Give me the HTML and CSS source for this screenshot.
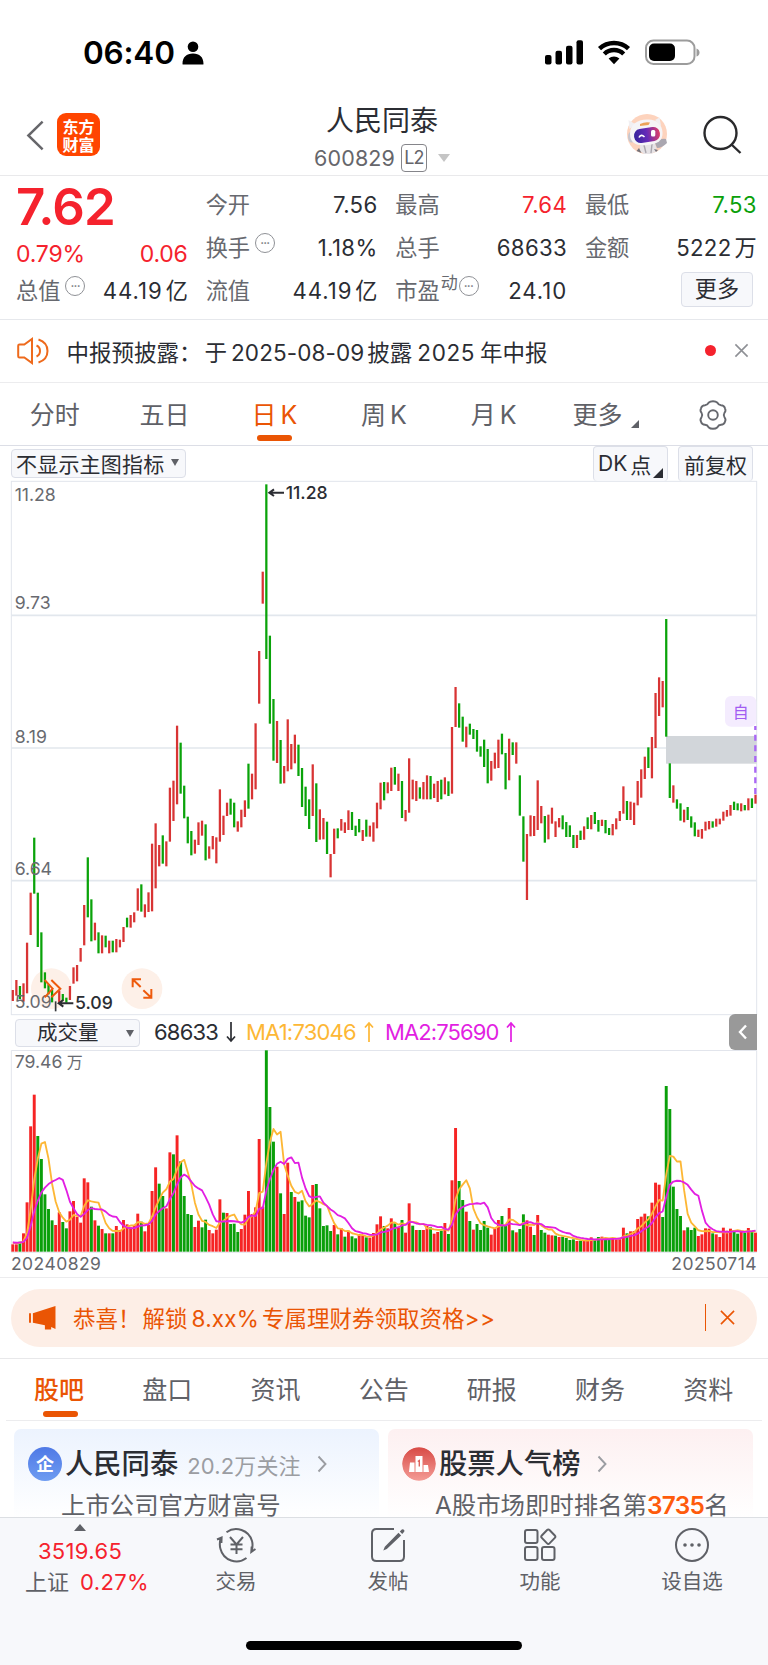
FILE: index.html
```html
<!DOCTYPE html>
<html lang="zh-CN">
<head>
<meta charset="utf-8">
<title>人民同泰 600829</title>
<link rel="stylesheet" href="styles.css">
</head>
<body>
<div class="app">
  <div class="status">
    <span class="clock">06:40</span>
    <svg class="person" viewBox="0 0 22 24"><circle cx="11" cy="5.800" r="5.300"/><path d="M0.500 23c0-7 4-10.500 10.500-10.500S21.500 16 21.500 23q0 .5-.8.5H1.300q-.8 0-.8-.5z"/></svg>
    <svg class="sys" viewBox="0 0 158 28">
      <rect x="1" y="16" width="6.500" height="9.500" rx="2"/><rect x="11.500" y="11.800" width="6.500" height="13.700" rx="2"/><rect x="22" y="6.800" width="6.500" height="18.700" rx="2"/><rect x="32.500" y="1.300" width="6.500" height="24.200" rx="2"/>
      <g class="wifi"><path d="M55.500 9.600a21.500 21.500 0 0 1 29 0"/><path d="M60.300 15a14 14 0 0 1 19.400 0"/></g><path d="M64.600 19.600a8 8 0 0 1 10.800 0L70 25.300z"/>
      <rect class="shell" x="102" y="1.500" width="48.500" height="23.500" rx="7.500"/><rect x="105" y="4.500" width="26" height="17.500" rx="5"/><path class="nub" d="M152.500 9.500q3 1 3 4t-3 4z"/>
    </svg>
  </div>

  <header class="head">
    <svg class="back" viewBox="0 0 20 32"><path d="M17.500 1.500L2.500 16l15 14.500"/></svg>
    <div class="logo"><span>东方</span><span>财富</span></div>
    <div class="title">
      <h1>人民同泰</h1>
      <div class="code"><span class="num">600829</span><span class="l2">L2</span><i class="drop"></i></div>
    </div>
    <svg class="robot" viewBox="0 0 44 44">
      <defs><linearGradient id="visor" x1="0" y1="0" x2="1" y2="0"><stop offset="0" stop-color="#35249c"/><stop offset=".5" stop-color="#652ab8"/><stop offset="1" stop-color="#df3e68"/></linearGradient></defs>
      <circle cx="22" cy="22" r="20" fill="#fdd3bd"/>
      <path d="M10 12L3.500 8l1 9zM30 8l4.500-2.500L36 14z" fill="#f1eff2"/>
      <ellipse cx="6.500" cy="25" rx="3.500" ry="5.500" fill="#c7c6ce"/>
      <path d="M15 31h15l2 8-6 3h-7l-4-3z" fill="#e6e3e6"/><path d="M19 33l2 8M27 32l-1 9" stroke="#aaa7ae" stroke-width="1.400" fill="none"/><path d="M14 36l-2.500 3 5 2zM29 37l2 3 2-2z" fill="#77747b"/>
      <path d="M30 31q5-5 11-4l1 4q-5 5-10 5z" fill="#aaa7b0"/>
      <path d="M5 22C5 12 12 8 22 7.500s15 5 15.500 13-5 11.500-15 12.500S5 32 5 22z" fill="#f5f4f6"/>
      <path d="M15 12q5-2.500 10-1.500l-1.500 2.500L15 14z" fill="#eba258"/>
      <rect x="9" y="16" width="26" height="14" rx="6.500" fill="url(#visor)" transform="rotate(-9 22 23)"/>
      <path d="M14 25.500q2-4 5.500-.5" stroke="#fff" stroke-width="1.600" fill="none"/><rect x="26" y="18" width="4.300" height="6.500" rx="1.500" fill="#fff"/>
    </svg>
    <svg class="search" viewBox="0 0 40 40"><circle cx="18.500" cy="18" r="16"/><path d="M29.500 29.500l9 8.500"/></svg>
  </header>

  <section class="quote">
    <div class="price">
      <b class="last">7.62</b>
      <div class="row red"><span>0.79%</span><span>0.06</span></div>
    </div>
    <div class="cell c2"><label>今开</label><span>7.56</span></div>
    <div class="cell c3"><label>最高</label><span class="red">7.64</span></div>
    <div class="cell c4"><label>最低</label><span class="green">7.53</span></div>
    <div class="cell c2"><label>换手<i class="more-dot">•••</i></label><span>1.18%</span></div>
    <div class="cell c3"><label>总手</label><span>68633</span></div>
    <div class="cell c4"><label>金额</label><span>5222<em>万</em></span></div>
    <div class="cell c1"><label>总值<i class="more-dot">•••</i></label><span class="wide">44.19<em>亿</em></span></div>
    <div class="cell c2"><label>流值</label><span class="wide">44.19<em>亿</em></span></div>
    <div class="cell c3"><label>市盈<sup>动</sup><i class="more-dot tight">•••</i></label><span class="wide">24.10</span></div>
    <div class="cell c4 end"><button class="btn big">更多</button></div>
  </section>

  <section class="news">
    <svg class="speaker" viewBox="0 0 32 28"><path d="M2.500 7.500h4.800L15 2v24l-7.700-5.500H2.500q-1.300 0-1.300-1.300V8.800q0-1.300 1.300-1.300z"/><path d="M19.500 8.500q3.500 1.500 3.500 5.500t-3.500 5.500M21.500 2.500q9 3 9 11.500t-9 11.500"/></svg>
    <span class="news-text">中报预披露：<span class="g1">于</span><span class="dt">2025-08-09</span>披露<span class="yr">2025</span>年中报</span>
    <i class="dot"></i>
    <svg class="close" viewBox="0 0 16 16"><path d="M1.500 1.500l13 13M14.500 1.500l-13 13"/></svg>
  </section>

  <nav class="tabs periods">
    <a>分时</a><a>五日</a><a class="on">日<span>K</span></a><a>周<span>K</span></a><a>月<span>K</span></a><a class="has-corner">更多<svg class="corner" viewBox="0 0 8 8"><path d="M8 0v8H0z"/></svg></a>
    <a><svg class="gear" viewBox="0 0 30 30"><path d="M10.500 2.800Q12.200 1.200 15 1.200T19.500 2.800Q20.500 5 23 5.200Q26 5.200 27 8.300Q28.200 11 26.500 12.700Q25 15 26.500 17.300Q28.200 19 27 21.700Q26 24.800 23 24.800Q20.500 25 19.500 27.200Q17.800 28.800 15 28.800T10.500 27.200Q9.500 25 7 24.800Q4 24.800 3 21.700Q1.800 19 3.500 17.300Q5 15 3.500 12.700Q1.800 11 3 8.300Q4 5.200 7 5.200Q9.500 5 10.500 2.800z"/><circle cx="15" cy="15" r="4.800"/></svg></a>
  </nav>

  <div class="tools">
    <button class="btn ind">不显示主图指标<i class="tri"></i></button>
    <button class="btn dk">DK<span>点</span><svg class="corner dark" viewBox="0 0 8 8"><path d="M8 0v8H0z"/></svg></button>
    <button class="btn fq">前复权</button>
  </div>
  <svg class="kline" id="kline" viewBox="0 0 2304 1608"></svg>

  <div class="volhead">
    <button class="btn vol">成交量<i class="tri"></i></button>
    <span class="v0">68633<svg class="arr" viewBox="0 0 10 22"><path d="M5 1v19M1 15.500l4 4.500 4-4.500"/></svg></span>
    <span class="v1">MA1:73046<svg class="arr" viewBox="0 0 10 22"><path d="M5 21V2M1 6.500L5 2l4 4.500"/></svg></span>
    <span class="v2">MA2:75690<svg class="arr" viewBox="0 0 10 22"><path d="M5 21V2M1 6.500L5 2l4 4.500"/></svg></span>
    <div class="fold"><svg viewBox="0 0 10 16"><path d="M8 1.500L2 8l6 6.500"/></svg></div>
  </div>
  <svg class="volume" id="volume" viewBox="0 120 2304 609"></svg>
  <div class="dates"><span>20240829</span><span>20250714</span></div>

  <div class="promo-wrap">
    <div class="promo">
      <svg class="horn" viewBox="0 0 30 26"><path d="M1 8.500h2v10H1zM5 8.500L28.500 1v24l-4.500-2v2.500h-6.500V21L5 18.500z"/></svg>
      <span class="promo-text">恭喜！<span class="p1">解锁</span><span class="p2">8.xx%</span>专属理财券领取资格<span class="p3">&gt;&gt;</span></span>
      <i class="bar"></i>
      <svg class="close" viewBox="0 0 16 16"><path d="M1 1l14 14M15 1L1 15"/></svg>
    </div>
  </div>

  <nav class="tabs info"><a class="on">股吧</a><a>盘口</a><a>资讯</a><a>公告</a><a>研报</a><a>财务</a><a>资料</a></nav>

  <section class="cards">
    <div class="card blue">
      <div class="line"><i class="badge">企</i><b>人民同泰</b><small>20.2万关注</small><svg class="chev" viewBox="0 0 10 18"><path d="M1.500 1.500L8.500 9l-7 7.500"/></svg></div>
      <p>上市公司官方财富号</p>
    </div>
    <div class="card pink">
      <div class="line"><svg class="badge" viewBox="0 0 34 34"><defs><linearGradient id="rank" x1="0" y1="0" x2="0" y2="1"><stop offset="0" stop-color="#d84b46"/><stop offset="1" stop-color="#f49c96"/></linearGradient></defs><circle cx="17" cy="17" r="16.800" fill="url(#rank)"/><path fill="#fff" d="M8 15.500h4.500V25H7zM13.500 9h7v16h-7zM21.500 18H26l1 7h-5.500z"/><path d="M15.800 14.500l1.500-1v6" stroke="#dd625c" stroke-width="1.400" fill="none"/></svg><b>股票人气榜</b><svg class="chev" viewBox="0 0 10 18"><path d="M1.500 1.500L8.500 9l-7 7.500"/></svg></div>
      <p>A股市场即时排名第<strong>3735</strong>名</p>
    </div>
  </section>

  <footer class="dock">
    <div class="index"><i class="up"></i><span class="red">3519.65</span><div><em>上证</em><span class="red">0.27%</span></div></div>
    <div class="item"><svg viewBox="0 0 40 36"><path d="M10.500 5.200A16.500 16.500 0 0 1 36 14Q37.200 18 35.700 24.500M39.500 22l-4.200 3 .4-5.500M30.500 31A16.500 16.500 0 0 1 4.500 22Q3 17 4.800 10.500M1 12.500l4.600-2-.2 5.500M14 10l6.500 7.500L27 10M20.500 17.500V27M14.500 17.500h12M14.500 22.300h12"/></svg><span>交易</span></div>
    <div class="item"><svg viewBox="0 0 40 36"><path d="M26 2H8.500Q4 2 4 6.500v23Q4 34 8.500 34h23q4.500 0 4.500-4.500V13"/><path class="fill" d="M15.300 23.500l1.500-3.800L30.500 5.800l2.600 2.600L18.800 22zM31.800 4.500l2-2q1.100-.8 2.100.2t.3 2.100l-2 2.100z"/></svg><span>发帖</span></div>
    <div class="item"><svg viewBox="0 0 40 36"><rect x="5" y="3" width="12.500" height="13" rx="2"/><rect x="5" y="20" width="12.500" height="13" rx="2"/><rect x="22" y="20" width="12.500" height="13" rx="2"/><path d="M27.100 3q1.200-1.200 2.400 0l5.300 5.500q1.200 1.200 0 2.400l-5.300 5.500q-1.200 1.200-2.400 0l-5.300-5.500q-1.200-1.200 0-2.400z"/></svg><span>功能</span></div>
    <div class="item"><svg viewBox="0 0 40 36"><circle cx="20" cy="18" r="16"/><g class="fill"><circle cx="13" cy="18" r="1.800"/><circle cx="20" cy="18" r="1.800"/><circle cx="27" cy="18" r="1.800"/></g></svg><span>设自选</span></div>
    <div class="home"></div>
  </footer>
</div>
<script src="chart.js"></script>
</body>
</html>
```
FILE: styles.css
```css
* { box-sizing: border-box; }
body { margin: 0; background: #fff; font-family: Inter, "Noto Sans CJK SC", sans-serif; color: #2b2d33; }
i, em { font-style: normal; }
svg { display: block; flex: none; }
.app { width: 768px; height: 1665px; overflow: hidden; display: flex; flex-direction: column; }
.app > * { flex: none; }
.red { color: #f5222d; }
.green { color: #0aa00a; }

.status { height: 98px; padding: 38px 66px 0 83px; display: flex; align-items: flex-start; }
.clock { font-size: 31.500px; font-weight: 600; line-height: 29px; color: #000; width: 99px; letter-spacing: -.2px; }
.person { width: 22px; height: 24px; margin-top: 3px; }
.sys { width: 158px; height: 28px; margin: .5px 0 0 auto; }
.wifi { fill: none; stroke: #000; stroke-width: 4.500; }
.shell { fill: none; stroke: #9c9c9c; stroke-width: 2; }
.nub { fill: #9c9c9c; }

.head { height: 78px; border-bottom: 1.500px solid #e9e9eb; display: grid; grid-template-columns: 31px 253px 1fr auto auto; padding: 0 26px 0 26px; align-items: start; }
.back { width: 19px; height: 31px; margin-top: 22px; fill: none; stroke: #66666a; stroke-width: 2.600; }
.logo { width: 43px; height: 43px; margin-top: 15px; border-radius: 9px; background: #ff4500; color: #fff; font: 700 16px/18px "Noto Sans CJK SC", sans-serif; padding: 3.500px 0; display: flex; flex-direction: column; align-items: center; }
.logo span { height: 18px; }
.title { width: 144px; display: flex; flex-direction: column; align-items: center; }
.title h1 { margin: 6px 0 0; font-size: 28px; line-height: 34px; font-weight: 400; }
.code { display: flex; align-items: center; height: 28px; margin-top: 6px; color: #66666b; font-size: 21.500px; }
.code .num { letter-spacing: .15px; width: 87px; }
.l2 { width: 26px; height: 28px; border: 1.500px solid #85858a; border-radius: 4px; font-size: 18px; line-height: 26px; text-align: center; letter-spacing: -.8px; }
.drop { margin-left: 11px; border: 6px solid transparent; border-top: 8px solid #c5c5c5; border-bottom: 0; }
.robot { width: 44px; height: 44px; margin-top: 14px; }
.search { width: 40px; height: 40px; margin: 17px 0 0 33px; fill: none; stroke: #2a2a2c; stroke-width: 2.400; }

.quote { height: 143.500px; border-bottom: 1.500px solid #e6e8ec; padding: 7px 11.500px 0 16px; display: grid; grid-template-columns: repeat(4, 1fr); grid-template-rows: repeat(3, 43px); column-gap: 18px; font-size: 22.200px; }
.price { grid-row: 1 / 3; grid-column: 1; color: #f5222d; }
.last { display: block; font-size: 51px; line-height: 48px; font-weight: 600; letter-spacing: -.8px; }
.row { display: flex; justify-content: space-between; font-size: 23px; line-height: 28px; margin-top: 9px; letter-spacing: -.2px; }
.cell { display: flex; justify-content: space-between; align-items: center; line-height: 43px; }
.cell label { color: #67696f; display: flex; }
.cell span { letter-spacing: .35px; margin-right: -.3px; }
.cell span.wide { letter-spacing: .95px; }
.cell em { margin-left: 3px; letter-spacing: 0; }
.cell.end { justify-content: flex-end; }
.more-dot { width: 20px; height: 20px; border: 1.400px solid #8f9196; border-radius: 50%; margin: 7px 0 0 5px; font-size: 6px; line-height: 17px; text-align: center; color: #77797e; letter-spacing: -.3px; }
.more-dot.tight { margin-left: 1px; }
sup { font-size: 17px; line-height: 29px; margin-left: 1px; }
.btn { font: inherit; color: #2b2d33; background: #f7f8fb; border: 1.400px solid #dcdfe8; border-radius: 4px; padding: 0; display: flex; align-items: center; }
.btn.big { width: 72px; height: 35px; margin: -3px 3.500px 0 0; justify-content: center; line-height: 30px; }

.news { height: 63.500px; border-bottom: 1.500px solid #ececee; padding: 0 19px 0 17px; display: flex; align-items: center; font-size: 22.500px; }
.speaker { width: 32px; height: 28px; margin-right: 17.500px; fill: none; stroke: #ee6a1c; stroke-width: 2; }
.news-text { flex: 1; white-space: nowrap; }
.g1 { margin-left: 3px; }
.dt { margin: 0 3px 0 4px; letter-spacing: .1px; }
.yr { margin: 0 5px 0 5px; letter-spacing: .6px; }
.dot { width: 11px; height: 11px; border-radius: 50%; background: #f5222d; margin-right: 18px; }
.close { width: 15px; height: 15px; fill: none; stroke: #8e9095; stroke-width: 1.700; }

.tabs { display: grid; grid-template-columns: repeat(7, 1fr); font-size: 25px; color: #5f6167; }
.tabs a { position: relative; display: flex; align-items: center; justify-content: center; line-height: 36px; }
.tabs a span { margin-left: 4px; }
.tabs .on { color: #ea5504; }
.tabs .on::after { content: ""; position: absolute; left: 50%; width: 35px; height: 6.500px; margin-left: -17.500px; border-radius: 3px; background: #ea5504; }
.periods { height: 63px; border-bottom: 1.500px solid #dcdee6; }
.periods a { padding-top: 1px; }
.periods .on::after { bottom: 4px; }
.periods .has-corner { padding-left: 5px; }
.corner { width: 8px; height: 8px; align-self: flex-end; margin: 0 0 17px 9px; fill: #5f6167; }
.gear { width: 30px; height: 30px; fill: none; stroke: #66686e; stroke-width: 1.900; }

.tools { height: 34px; padding: 0 15px 0 11px; display: flex; font-size: 21px; white-space: nowrap; }
.btn.ind { width: 175px; height: 29px; margin-top: 3px; padding: 0 0 2px 4px; letter-spacing: .2px; }
.tri { border: 4.500px solid transparent; border-top: 7.500px solid #5f6167; border-bottom: 0; margin-left: 7px; }
.btn.dk { width: 75px; height: 35px; margin-left: auto; padding: 0 0 1px 4px; position: relative; border-bottom: 0; }
.dk span { margin-left: 3px; }
.corner.dark { width: 10px; height: 10px; position: absolute; right: 4px; bottom: 3px; margin: 0; fill: #2b2d33; }
.btn.fq { width: 75px; height: 35px; margin-left: 10px; padding-bottom: 1px; justify-content: center; border-bottom: 0; }

.kline { width: 768px; height: 536px; overflow: visible; }
.kline text, .volume text { font-size: 53px; fill: #686a70; }
.kline .mark { fill: #2b2d33; font-weight: 500; }
.frame { fill: none; stroke: #e2e5ec; stroke-width: 3; }
.grid { stroke: #e2e7ed; stroke-width: 5; }
.up-c { stroke: #d83434; stroke-width: 6.800; }
.dn-c { stroke: #0aa30a; stroke-width: 6.800; }
.up-v { fill: #f62424; }
.dn-v { fill: #0a9f0a; }
.low-c { stroke: #35373c; stroke-width: 5; }
.gap { fill: #d2d6da; }
.orb { fill: #fdf0e8; }
.glyph { fill: none; stroke: #ee5a0c; stroke-width: 6; }
.arrow { fill: none; stroke: #2b2d33; stroke-width: 6; }
.self { fill: #f4ecfe; }
.kline .self-t { fill: #a25cf2; font-size: 48px; }
.purple { stroke: #aa66f5; stroke-width: 7; stroke-dasharray: 18 14; }
.ma { fill: none; stroke-width: 5.500; stroke-linejoin: round; }
.ma5 { stroke: #fdb735; }
.ma10 { stroke: #e21fe2; }

.volhead { height: 34px; padding: 3px 0 0 15px; display: flex; font-size: 22px; line-height: 28px; position: relative; }
.btn.vol { width: 125px; height: 28px; font-size: 20.500px; padding: 0 5px 0 21px; justify-content: space-between; margin-right: 14px; line-height: 24px; }
.volhead span { display: flex; align-items: center; height: 26px; }
.volhead .arr { height: 22px; width: 10px; margin-left: 8px; fill: none; stroke: currentColor; stroke-width: 1.700; }
.v0 { width: 92px; letter-spacing: -.8px; }
.v1 { color: #fdb735; width: 139px; letter-spacing: -.8px; }
.v2 { color: #e21fe2; letter-spacing: -.9px; }
.fold { position: absolute; left: 729px; top: -2px; width: 28px; height: 36px; border-radius: 6px 0 0 6px; background: #999; display: flex; align-items: center; justify-content: center; }
.fold svg { width: 10px; height: 16px; fill: none; stroke: #fff; stroke-width: 2.400; }
.volume { width: 768px; height: 203px; }
.dates { height: 25px; border-bottom: 1.500px solid #ececee; display: flex; justify-content: space-between; padding: 0 11px; font-size: 17.500px; line-height: 22px; color: #65676d; letter-spacing: .45px; }

.promo-wrap { height: 81px; padding: 11px 11px 0; border-bottom: 1.500px solid #e8e8ea; }
.promo { height: 58px; border-radius: 29px; background: #fdeee6; color: #ea5504; display: flex; align-items: center; padding: 0 22px 2px 17px; font-size: 22.500px; }
.horn { width: 29px; height: 25px; fill: #ea5504; }
.promo-text { flex: 1; margin-left: 16px; white-space: nowrap; }
.p1 { margin-left: 2px; }
.p2 { margin: 0 3px 0 4px; letter-spacing: .2px; }
.p3 { letter-spacing: .6px; }
.bar { width: 1.500px; height: 27px; background: #ea5504; margin-right: 14px; }
.promo .close { stroke: #ea5504; }

.info { height: 62px; margin: 0 6px; border-bottom: 1.500px solid #ececee; grid-template-columns: repeat(7, 108.200px); }
.info a { padding: 1px 2px 0 0; }
.info .on { font-weight: 500; }
.info .on::after { bottom: 3px; }

.cards { height: 96px; padding: 8px 15px 0 14px; display: grid; grid-template-columns: 365px 365px; gap: 9px; overflow: hidden; }
.card { border-radius: 7px; height: 110px; padding: 17px 0 0 14px; }
.blue { background: linear-gradient(#ecf3fe, #fff 90px); }
.pink { background: linear-gradient(#fdf0f1, #fff 90px); }
.line { display: flex; align-items: center; height: 36px; white-space: nowrap; }
.badge { width: 34px; height: 34px; border-radius: 50%; flex: none; background: linear-gradient(#4f79e6, #6e9cf1); color: #fff; text-align: center; font: 700 18px/32px "Noto Sans CJK SC", sans-serif; }
svg.badge { background: none; }
.line b { font-size: 28.300px; font-weight: 500; margin-left: 3px; line-height: 36px; }
.line small { font-size: 22px; color: #9b9da2; margin: -1px 0 0 9px; letter-spacing: .15px; }
.chev { width: 10px; height: 18px; margin-left: 16px; fill: none; stroke: #9b9da2; stroke-width: 1.900; }
.card p { margin: 5px 0 0 33px; font-size: 24.400px; line-height: 36px; color: #5f6167; white-space: nowrap; }
.card strong { color: #fe5b0c; font-weight: 600; letter-spacing: -.7px; }

.dock { flex: 1 !important; background: #f7f8fb; border-top: 1.500px solid #dcdfe3; display: grid; grid-template-columns: 160px repeat(4, 152px); font-size: 20.500px; color: #5f6167; grid-template-rows: 123px auto; }
.index { display: flex; flex-direction: column; align-items: center; font-size: 22px; padding-top: 6px; line-height: 30px; }
.up { border: 6.500px solid transparent; border-bottom: 7px solid #5f6167; border-top: 0; margin-bottom: 5px; }
.index > div { display: flex; gap: 11px; margin-left: 14px; }
.index .red { letter-spacing: .35px; }
.index > span { margin-bottom: 1px; }
.item { display: flex; flex-direction: column; align-items: center; padding-top: 9px; }
.item svg { width: 40px; height: 36px; fill: none; stroke: #5f6167; stroke-width: 2; }
.item .fill { fill: #5f6167; stroke: none; }
.item span { line-height: 30px; margin-top: 4px; }
.home { grid-column: 1 / -1; width: 276px; height: 9px; border-radius: 5px; background: #000; margin-left: 246px; }
```
FILE: chart.js
```js
// Daily bars: colour letter, top and bottom, measured in thirds of a pixel.
const early = "r750-783 r720-767 g738-777 r730-785 r608-760 r458-585 g293-461 g458-621 g577-727 g697-745 g733-763 g750-787 k784-814 r752-790 g762-782 g773-788 r738-780 r682-731 r675-724 r624-665 r495-616 g352-532 g478-604 r548-601 g577-640 r586-640 g587-622 r602-640 g602-637 r597-637 r599-622 r561-606 g533-562 r525-563 r517-547 r445-512 g433-515 r493-532 r457-516 r311-514 r250-445 r315-379 g286-371 r304-379 r143-305 r122-243 r-43-193 g8-161 g137-235 g230-310 g273-346 r299-341 r247-315 r242-287 g253-361 r319-356 r288-328 r292-370 r148-305 r227-285 r188-228 g176-224 g188-262 r244-275 r209-262 r181-231 g71-206 r101-178 r-50-148 r-267--109 r-505--409 g-767--243 g-313--49 g-123-62 r-57-69 g0-131 r78-130 r-62-94 r12-88 r-16-70 g14-108 g84-201 g140-228 g178-267 r73-228 g130-306 r208-299 r234-298 g245-342 r342-412 r266-342 g265-295 r237-272 r247-279 r211-270 g216-270 g257-288 g237-277 r270-303 g239-290 r257-290 r247-305 r188-265 r128-208";
const late = "g576-631 r577-610 r533-603 g531-584 r551-603 g573-684 r660-694 r505-668 r569-628 r573-633 g592-626 r576-628 r556-628 g558-628 r581-624 r573-636 g569-628 r562-613 g574-618 r411-611 r291-411 g340-413 g380-455 r410-472 g401-434 g417-447 g420-485 g469-500 g449-531 g477-580 r513-572 r488-536 r449-534 g431-493 g489-598 r446-571 g457-495 r457-521 g556-677 g679-815 r732-930 r676-739 r678-738 r571-720 r648-700 g678-758 r674-748 r653-701 r694-741 r684-712 g676-718 g696-741 g706-741 g735-774 r735-774 g722-750 r709-749 g682-717 r675-718 g666-702 g690-725 r689-708 g690-730 g714-735 r702-736 r685-718 r663-693 r589-671 g633-690 r635-690 r638-705 r573-646 r538-623 r500-567 g472-534 r441-565 r309-474 r262-378 r273-352 g87-440 g520-624 r586-638 g628-656 g640-692 r659-697 g651-690 g679-713 g697-739 r719-741 r717-746 r695-722 r693-718 g694-713 r686-710 r686-703 r665-692 r660-680 r645-677 g635-660 g640-661 r640-664 g645-661 r625-661 g625-654 r614-641";
const volumes = "r703 r703 g695 r670 r577 r349 r254 g378 g447 g553 g597 g631 r645 r607 g636 g655 r604 r573 r621 r638 r505 r517 g590 r631 g647 r657 g670 r670 g670 r648 r660 r630 r643 r652 r645 r611 g635 r664 r645 r543 r472 g521 g558 r595 r427 g433 r376 g454 g558 g612 g615 r651 r632 g652 g629 r660 r670 r659 r568 g608 r609 g642 g641 g666 r657 r614 r543 r612 r592 r387 r590 g121 g291 g395 r470 g550 r612 r458 g546 r561 g575 g571 g617 g622 r525 g522 g595 g648 g646 g663 r645 g673 r655 g680 r662 g679 g685 r672 r677 g682 r683 r669 r643 r619 g648 r655 r625 g640 r652 g630 r668 r580 g647 r660 g660 r660 r648 g652 r671 r666 g662 r639 g672 r511 r354 g513 g570 r605 g633 r659 g642 g660 g633 g653 r674 r655 r630 g618 g645 r594 g661 r667 g657 g613 r631 r650 g675 r615 g660 g668 r674 r676 g677 r681 g680 g684 g690 g688 r693 g692 r693 r692 r682 g690 g681 r680 g687 g687 r684 r688 r685 r653 g670 r664 r663 r627 r620 r611 g619 r578 r518 r524 g621 g228 g297 g530 g597 g618 r661 g652 g660 g653 r678 r673 r655 r656 g670 r673 r681 r653 r662 r656 g660 g671 r665 g668 r654 g664 r668";

const barX = i => 38.4 + i * 10.712;
const parse = (text, base) => text.split(" ").map(s => {
  const m = s.match(/^(.)(-?\d+)-(-?\d+)$/);
  return { c: m[1], hi: +m[2] + base, lo: +m[3] + base };
});
const bars = parse(early, 780).concat(parse(late, 330));
const cls = { r: "up-c", g: "dn-c", k: "low-c" };

let k = '<rect class="frame" x="34" y="4" width="2236" height="1600"/>';
k += [406, 804, 1202].map(y => `<path class="grid" d="M34 ${y}H2270"/>`).join("");
k += '<circle class="orb" cx="154" cy="1526" r="61"/><circle class="orb" cx="426" cy="1526" r="61"/>';
k += '<rect class="gap" x="1998" y="768" width="272" height="83"/>';
k += bars.map((b, i) => `<path class="${cls[b.c]}" d="M${barX(i).toFixed(1)} ${b.hi}V${b.lo}"/>`).join("");
k += [["11.28", 64], ["9.73", 388], ["8.19", 788], ["6.64", 1186], ["5.09", 1585]]
  .map(([t, y]) => `<text x="44" y="${y}">${t}</text>`).join("");
k += '<path class="arrow" d="M852 38H808M822 28L808 38l14 10"/><text class="mark" x="857" y="58">11.28</text>';
k += '<path class="glyph" d="M134 1500l24 26-24 26M154 1500l27 26-27 26M398 1522v-24h25M398 1498l24 23M430 1553h24v-26M454 1553l-24-22"/>';
k += '<path class="arrow" d="M220 1570H176M190 1560l-14 10 14 10"/><text class="mark" x="225" y="1588">5.09</text>';
k += '<rect class="self" x="2175" y="648" width="94" height="92" rx="18"/><text class="self-t" x="2198" y="714">自</text>';
k += '<path class="purple" d="M2266 738V944" stroke-dashoffset="6"/>';
document.getElementById("kline").innerHTML = k;

const vols = volumes.split(" ").map(s => ({ c: s[0], y: +s.slice(1) }));
const average = n => vols.map((_, i) => {
  let sum = 0;
  for (let j = i - n + 1; j <= i; j++) sum += j < 0 ? 697 : vols[j].y;
  return `${barX(i).toFixed(1)},${(sum / n).toFixed(1)}`;
}).join(" ");
let v = '<path class="frame" d="M34 727V121.500H2270V727z"/>';
v += vols.map((b, i) => `<rect class="${b.c === "r" ? "up-v" : "dn-v"}" x="${(barX(i) - 4.4).toFixed(1)}" y="${b.y}" width="8.8" height="${725 - b.y}"/>`).join("");
v += `<polyline class="ma ma5" points="${average(5)}"/><polyline class="ma ma10" points="${average(10)}"/>`;
v += '<text x="44" y="173">79.46</text><text x="200" y="173" style="font-size:48px">万</text>';
document.getElementById("volume").innerHTML = v;
```
